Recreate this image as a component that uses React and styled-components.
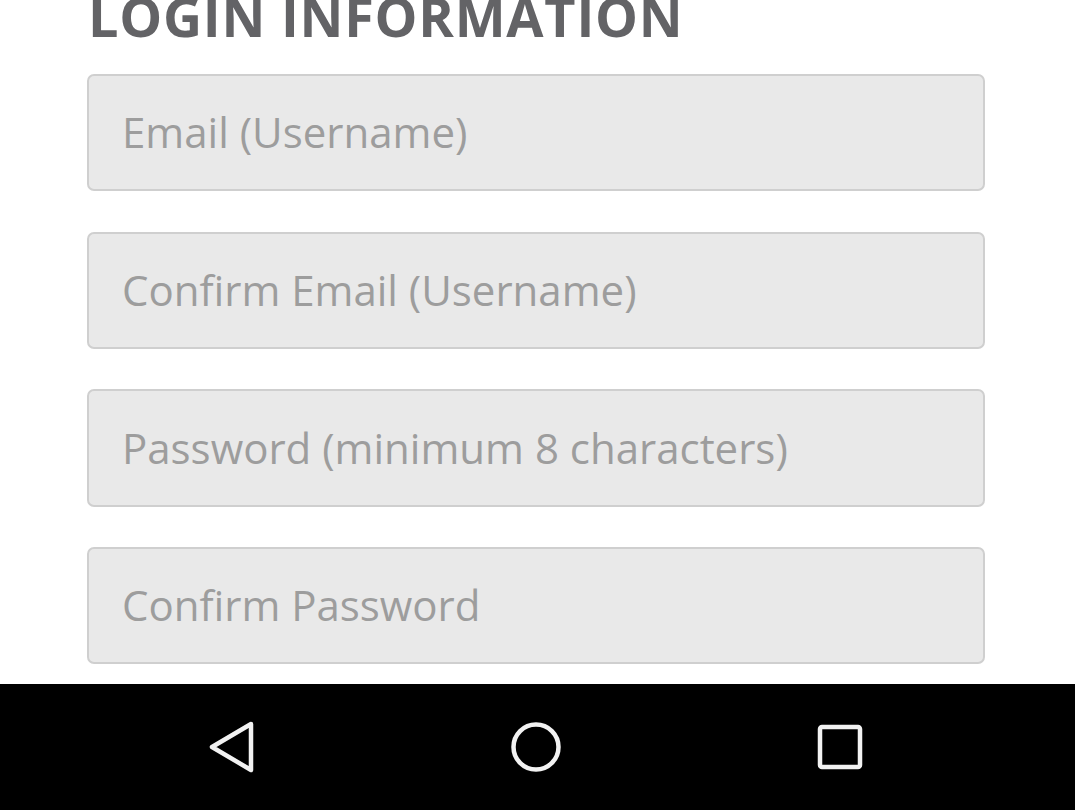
import React from "react";
import styled, { createGlobalStyle } from "styled-components";

const GlobalStyle = createGlobalStyle`
  html, body {
    margin: 0;
    padding: 0;
    background: #ffffff;
  }
  body {
    font-family: "Open Sans", "Noto Sans", sans-serif;
  }
`;

const fields = [
  "Email (Username)",
  "Confirm Email (Username)",
  "Password (minimum 8 characters)",
  "Confirm Password",
];

const App = () => {
  return (
    <Screen>
      <GlobalStyle />
      <Content>
        <Title>LOGIN INFORMATION</Title>
        <Form>
          {fields.map((f) => (
            <Field key={f} placeholder={f} />
          ))}
        </Form>
      </Content>
      <NavBar>
        <NavButton aria-label="Back">
          <svg width="48" height="52" viewBox="0 0 48 52">
            <path
              d="M43 3 L4 26 L43 49 Z"
              fill="none"
              stroke="#f2f2f2"
              strokeWidth="4.5"
              strokeLinejoin="round"
            />
          </svg>
        </NavButton>
        <NavButton aria-label="Home">
          <svg width="52" height="52" viewBox="0 0 52 52">
            <circle cx="26" cy="26" r="22.5" fill="none" stroke="#f2f2f2" strokeWidth="4.5" />
          </svg>
        </NavButton>
        <NavButton aria-label="Recents">
          <svg width="48" height="48" viewBox="0 0 48 48">
            <rect x="4" y="4" width="40" height="40" rx="2" fill="none" stroke="#f2f2f2" strokeWidth="4.5" />
          </svg>
        </NavButton>
      </NavBar>
    </Screen>
  );
};

export default App;

const Screen = styled.div`
  width: 1075px;
  height: 810px;
  display: flex;
  flex-direction: column;
  overflow: hidden;
  background: #ffffff;
`;

const Content = styled.div`
  height: 684px;
  overflow: hidden;
  padding: 0 90px 0 87px;
  display: flex;
  flex-direction: column;
`;

const Title = styled.h1`
  margin: -16px 0 0 0;
  padding-left: 1px;
  font-family: "Open Sans", sans-serif;
  font-weight: 700;
  font-size: 54px;
  line-height: 64px;
  color: #636366;
  letter-spacing: 0.75px;
  white-space: nowrap;
`;

const Form = styled.div`
  margin-top: 26px;
  display: flex;
  flex-direction: column;
  gap: 40.3px;
`;

const Field = styled.input`
  box-sizing: border-box;
  width: 898px;
  height: 117.4px;
  margin: 0;
  padding: 0 0 2px 33px;
  background: #e9e9e9;
  border: 2px solid #cfcfcf;
  border-radius: 7px;
  font-family: "Open Sans", sans-serif;
  font-size: 42px;
  color: #555;
  outline: none;

  &::placeholder {
    color: #9d9d9d;
  }
`;

const NavBar = styled.div`
  flex: 1;
  background: #000000;
  display: grid;
  grid-template-columns: 1fr 1fr 1fr;
  align-items: center;
  padding: 0 83px 0 80px;
`;

const NavButton = styled.div`
  display: flex;
  justify-content: center;
  align-items: center;
`;
